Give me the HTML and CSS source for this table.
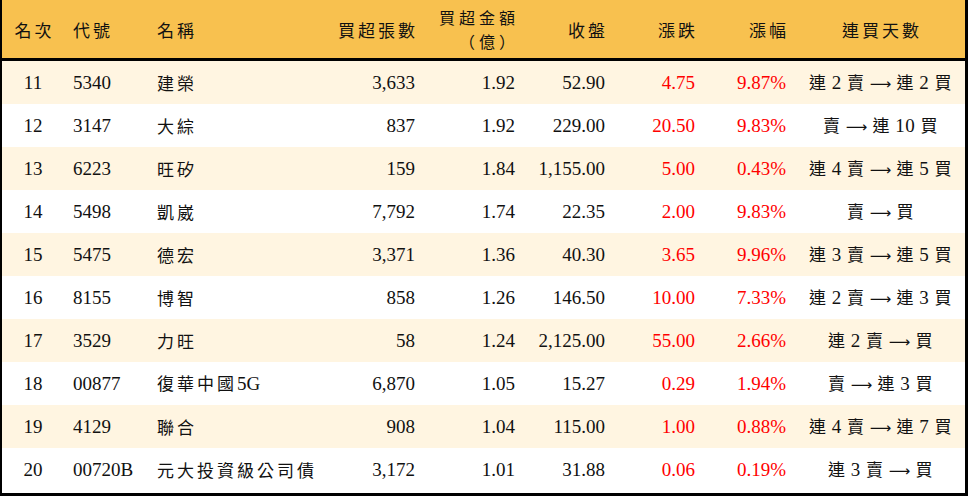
FILE: index.html
```html
<!DOCTYPE html>
<html lang="zh-Hant">
<head>
<meta charset="utf-8">
<link rel="stylesheet" href="styles.css">
</head>
<body>
<div class="frame">
<table class="grid">
<colgroup>
<col class="w1"><col class="w2"><col class="w3"><col class="w4"><col class="w5"><col class="w6"><col class="w7"><col class="w8"><col class="w9">
</colgroup>
<thead>
<tr>
<th class="ctr">名次</th>
<th class="lft">代號</th>
<th class="lft">名稱</th>
<th class="rgt">買超張數</th>
<th class="rgt two">買超金額<br>（億）</th>
<th class="rgt">收盤</th>
<th class="rgt">漲跌</th>
<th class="rgt">漲幅</th>
<th class="ctr">連買天數</th>
</tr>
</thead>
<tbody>
<tr class="alt"><td class="ctr">11</td><td class="lft">5340</td><td class="lft name">建榮</td><td class="rgt">3,633</td><td class="rgt">1.92</td><td class="rgt">52.90</td><td class="rgt up">4.75</td><td class="rgt up">9.87%</td><td class="ctr days"><span class="c">連</span> 2 <span class="c">賣</span> <span class="ar">⟶</span> <span class="c">連</span> 2 <span class="c">買</span></td></tr>
<tr><td class="ctr">12</td><td class="lft">3147</td><td class="lft name">大綜</td><td class="rgt">837</td><td class="rgt">1.92</td><td class="rgt">229.00</td><td class="rgt up">20.50</td><td class="rgt up">9.83%</td><td class="ctr days"><span class="c">賣</span> <span class="ar">⟶</span> <span class="c">連</span> 10 <span class="c">買</span></td></tr>
<tr class="alt"><td class="ctr">13</td><td class="lft">6223</td><td class="lft name">旺矽</td><td class="rgt">159</td><td class="rgt">1.84</td><td class="rgt">1,155.00</td><td class="rgt up">5.00</td><td class="rgt up">0.43%</td><td class="ctr days"><span class="c">連</span> 4 <span class="c">賣</span> <span class="ar">⟶</span> <span class="c">連</span> 5 <span class="c">買</span></td></tr>
<tr><td class="ctr">14</td><td class="lft">5498</td><td class="lft name">凱崴</td><td class="rgt">7,792</td><td class="rgt">1.74</td><td class="rgt">22.35</td><td class="rgt up">2.00</td><td class="rgt up">9.83%</td><td class="ctr days"><span class="c">賣</span> <span class="ar">⟶</span> <span class="c">買</span></td></tr>
<tr class="alt"><td class="ctr">15</td><td class="lft">5475</td><td class="lft name">德宏</td><td class="rgt">3,371</td><td class="rgt">1.36</td><td class="rgt">40.30</td><td class="rgt up">3.65</td><td class="rgt up">9.96%</td><td class="ctr days"><span class="c">連</span> 3 <span class="c">賣</span> <span class="ar">⟶</span> <span class="c">連</span> 5 <span class="c">買</span></td></tr>
<tr><td class="ctr">16</td><td class="lft">8155</td><td class="lft name">博智</td><td class="rgt">858</td><td class="rgt">1.26</td><td class="rgt">146.50</td><td class="rgt up">10.00</td><td class="rgt up">7.33%</td><td class="ctr days"><span class="c">連</span> 2 <span class="c">賣</span> <span class="ar">⟶</span> <span class="c">連</span> 3 <span class="c">買</span></td></tr>
<tr class="alt"><td class="ctr">17</td><td class="lft">3529</td><td class="lft name">力旺</td><td class="rgt">58</td><td class="rgt">1.24</td><td class="rgt">2,125.00</td><td class="rgt up">55.00</td><td class="rgt up">2.66%</td><td class="ctr days"><span class="c">連</span> 2 <span class="c">賣</span> <span class="ar">⟶</span> <span class="c">買</span></td></tr>
<tr><td class="ctr">18</td><td class="lft">00877</td><td class="lft name">復華中國<span class="lat">5G</span></td><td class="rgt">6,870</td><td class="rgt">1.05</td><td class="rgt">15.27</td><td class="rgt up">0.29</td><td class="rgt up">1.94%</td><td class="ctr days"><span class="c">賣</span> <span class="ar">⟶</span> <span class="c">連</span> 3 <span class="c">買</span></td></tr>
<tr class="alt"><td class="ctr">19</td><td class="lft">4129</td><td class="lft name">聯合</td><td class="rgt">908</td><td class="rgt">1.04</td><td class="rgt">115.00</td><td class="rgt up">1.00</td><td class="rgt up">0.88%</td><td class="ctr days"><span class="c">連</span> 4 <span class="c">賣</span> <span class="ar">⟶</span> <span class="c">連</span> 7 <span class="c">買</span></td></tr>
<tr><td class="ctr">20</td><td class="lft">00720B</td><td class="lft name">元大投資級公司債</td><td class="rgt">3,172</td><td class="rgt">1.01</td><td class="rgt">31.88</td><td class="rgt up">0.06</td><td class="rgt up">0.19%</td><td class="ctr days"><span class="c">連</span> 3 <span class="c">賣</span> <span class="ar">⟶</span> <span class="c">買</span></td></tr>
</tbody>
</table>
</div>
</body>
</html>
```

FILE: styles.css
```css
html, body {
  margin: 0;
  padding: 0;
  background: #ffffff;
}

.frame {
  width: 968px;
  height: 496px;
  box-sizing: border-box;
  border-left: 2px solid #000;
  border-right: 3px solid #000;
  border-bottom: 3px solid #000;
  overflow: hidden;
}

.grid {
  width: 963px;
  table-layout: fixed;
  border-collapse: separate;
  border-spacing: 0;
  font-family: "Liberation Serif", "Noto Sans CJK TC", serif;
  font-size: 19px;
  color: #111;
}

.w1 { width: 62px; }
.w2 { width: 84px; }
.w3 { width: 182px; }
.w4 { width: 95px; }
.w5 { width: 100px; }
.w6 { width: 90px; }
.w7 { width: 90px; }
.w8 { width: 91px; }
.w9 { width: 169px; }

.grid th {
  height: 61px;
  box-sizing: border-box;
  background: #f8c14f;
  border-bottom: 3px solid #000;
  font-family: "Noto Sans CJK TC", sans-serif;
  font-weight: 400;
  font-size: 17px;
  letter-spacing: 3px;
  line-height: 20px;
  padding: 2px 0 0 0;
  vertical-align: middle;
  color: #111;
}

.grid th.two {
  font-size: 16px;
  letter-spacing: 4px;
  line-height: 23.5px;
  padding-top: 1px;
}

.grid td {
  height: 43px;
  padding: 0;
  vertical-align: middle;
  line-height: 22px;
  white-space: nowrap;
}

.grid tr.alt td {
  background: #fff5e1;
}

.ctr { text-align: center; }
.lft { text-align: left; padding-left: 9px !important; }
.rgt { text-align: right; padding-right: 10px !important; }
.grid th.rgt { padding-right: 7px !important; }
.grid th.two { padding-right: 6px !important; }
.grid th.ctr { padding-left: 3px !important; }

.name {
  font-family: "Noto Sans CJK TC", sans-serif;
  font-size: 17px;
  letter-spacing: 3px;
}

.name .lat {
  font-family: "Liberation Serif", serif;
  font-size: 19px;
  letter-spacing: 0;
}

.up { color: #ff0000; }

.days {
  letter-spacing: 0.5px;
}

.days .c {
  font-family: "Noto Sans CJK TC", sans-serif;
  font-size: 17px;
}

.days .ar {
  font-family: "DejaVu Sans", sans-serif;
  font-size: 15px;
  letter-spacing: 0;
}
```
